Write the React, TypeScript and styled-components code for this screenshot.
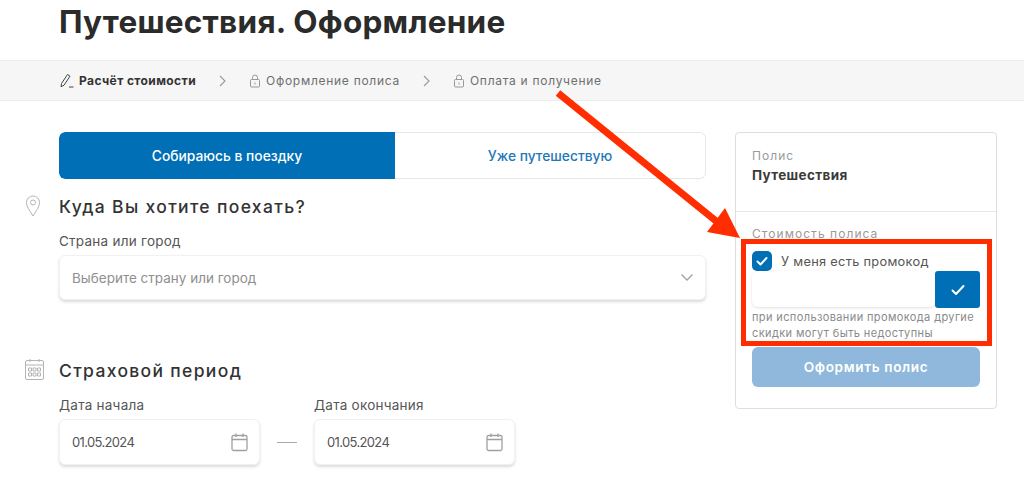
import styled, { createGlobalStyle } from 'styled-components';

const colors = {
  blue: '#006fb5',
  text: '#2f2f2f',
  line: '#e6e6e6',
};

const GlobalStyle = createGlobalStyle`
  html, body {
    margin: 0;
    background: #fff;
  }
  * {
    box-sizing: border-box;
  }
`;

const Page = styled.div`
  position: relative;
  width: 1024px;
  height: 491px;
  overflow: hidden;
  background: #fff;
  color: ${colors.text};
  font-family: Inter, 'Noto Sans', sans-serif;
`;

const Title = styled.h1`
  margin: 0;
  height: 60px;
  padding: 0 0 0 59px;
  font-size: 31.5px;
  line-height: 44px;
  font-weight: 700;
  letter-spacing: 0.25px;
  color: #2b2b2b;
`;

const Steps = styled.nav`
  display: flex;
  align-items: center;
  height: 41px;
  padding-left: 59px;
  background: #f6f6f6;
  border-top: 1px solid #ececec;
  border-bottom: 1px solid #ececec;
  font-size: 12px;
`;

const Step = styled.span<{ $active?: boolean }>`
  display: flex;
  align-items: center;
  gap: 5px;
  letter-spacing: ${p => (p.$active ? '0.4px' : '0.72px')};
  color: ${p => (p.$active ? '#333' : '#6f6f6f')};
  font-weight: ${p => (p.$active ? 700 : 400)};
`;

const StepArrow = styled.svg`
  width: 9px;
  height: 12px;
  margin: 0 22px;
  fill: none;
  stroke: #999;
  stroke-width: 1.1;
`;

const Content = styled.div`
  display: flex;
  align-items: flex-start;
  padding: 31px 0 0 25px;
  gap: 29px;
`;

const Form = styled.div`
  width: 681px;
  flex: none;
`;

const Tabs = styled.div`
  display: flex;
  height: 47px;
  margin-left: 34px;
  background: #fff;
  border-radius: 6px;
  overflow: hidden;
`;

const Tab = styled.div<{ $active?: boolean }>`
  flex: ${p => (p.$active ? '0 0 336px' : '1')};
  display: flex;
  align-items: center;
  justify-content: center;
  font-size: 13.8px;
  font-weight: 500;
  color: ${p => (p.$active ? '#fff' : '#1f78b8')};
  background: ${p => (p.$active ? colors.blue : '#fff')};
  border: ${p => (p.$active ? '0' : `1px solid ${colors.line}`)};
  border-left: 0;
  border-radius: ${p => (p.$active ? '6px 0 0 6px' : '0 6px 6px 0')};
`;

const SectionHead = styled.div<{ $top: number }>`
  display: flex;
  align-items: center;
  height: 24px;
  margin-top: ${p => p.$top}px;
`;

const SectionIcon = styled.svg`
  width: 34px;
  height: 22px;
  flex: none;
  fill: none;
  stroke: #b4b4b4;
  stroke-width: 1;
`;

const SectionTitle = styled.h2`
  margin: 0;
  font-size: 17.5px;
  font-weight: 500;
  letter-spacing: 1.33px;
  color: #333;
`;

const Fields = styled.div`
  display: flex;
  align-items: flex-end;
  margin: 15px 0 0 34px;
`;

const Field = styled.label<{ $wide?: boolean }>`
  display: block;
  width: ${p => (p.$wide ? '647px' : '201px')};
`;

const FieldLabel = styled.div`
  height: 16px;
  margin-bottom: 6px;
  font-size: 13.5px;
  line-height: 16px;
  letter-spacing: 0.25px;
  color: #555;
`;

const InputBox = styled.div<{ $placeholder?: boolean }>`
  display: flex;
  align-items: center;
  justify-content: space-between;
  height: ${p => (p.$placeholder ? 45 : 46)}px;
  padding: 0 11px 0 12px;
  background: #fff;
  border: 1px solid #f1f1f1;
  border-radius: 6px;
  box-shadow: 0 2px 3px rgba(0, 0, 0, 0.14);
  font-size: 13.5px;
  color: ${p => (p.$placeholder ? '#8f8f8f' : '#555')};
`;

const DateValue = styled.span`
  font-size: 13px;
  letter-spacing: -0.65px;
`;

const BoxIcon = styled.svg`
  width: 18px;
  height: 20px;
  fill: none;
  stroke: #a0a0a0;
  stroke-width: 1.3;
`;

const Dash = styled.div`
  width: 20px;
  height: 1px;
  margin: 0 17px 22px 17px;
  background: #aaa;
`;

const Sidebar = styled.aside`
  width: 262px;
  height: 277px;
  flex: none;
  border: 1px solid #dedede;
  border-radius: 4px;
`;

const PolicyBlock = styled.div`
  height: 79px;
  padding: 15px 16px 0;
  border-bottom: 1px solid ${colors.line};
`;

const SideLabel = styled.div`
  font-size: 12px;
  line-height: 15px;
  letter-spacing: 1.05px;
  color: #9a9a9a;
`;

const PolicyName = styled.div`
  margin-top: 4px;
  font-size: 13.5px;
  line-height: 16px;
  font-weight: 700;
  letter-spacing: 0.35px;
  color: #3a3a3a;
`;

const CostBlock = styled.div`
  padding: 14px 16px 0;
`;

const PromoRow = styled.div`
  display: flex;
  align-items: center;
  gap: 9px;
  height: 20px;
  margin-top: 10px;
  font-size: 12.8px;
  letter-spacing: 0.3px;
  color: #555;
`;

const Checkbox = styled.span`
  display: flex;
  align-items: center;
  justify-content: center;
  width: 20px;
  height: 20px;
  border-radius: 5px;
  background: ${colors.blue};
`;

const Check = styled.svg<{ $size: number }>`
  width: ${p => p.$size}px;
  height: ${p => p.$size}px;
  fill: none;
  stroke: #fff;
  stroke-width: 2;
  stroke-linecap: round;
  stroke-linejoin: round;
`;

const PromoInput = styled.div`
  display: flex;
  height: 37px;
`;

const PromoField = styled.div`
  flex: 1;
  margin-bottom: 1px;
  background: #fff;
  border-radius: 6px;
  box-shadow: 0 1px 3px rgba(0, 0, 0, 0.12);
`;

const PromoSubmit = styled.button`
  display: flex;
  align-items: center;
  justify-content: center;
  width: 45px;
  padding: 0;
  border: 0;
  border-radius: 3px;
  background: ${colors.blue};
`;

const Hint = styled.p`
  margin: 0;
  padding-top: 1px;
  font-size: 11px;
  line-height: 16px;
  letter-spacing: 0.38px;
  color: #8a8a8a;
`;

const Submit = styled.button`
  display: block;
  width: 228px;
  height: 40px;
  margin-top: 6px;
  border: 0;
  border-radius: 6px;
  background: #8fb8dc;
  color: #fff;
  font-family: inherit;
  font-size: 13.6px;
  font-weight: 600;
  letter-spacing: 0.65px;
`;

const Annotation = styled.svg`
  position: absolute;
  top: 0;
  left: 0;
  width: 1024px;
  height: 491px;
  pointer-events: none;
`;

const CalendarIcon = () => (
  <BoxIcon viewBox="0 0 18 20">
    <rect x="2" y="3.5" width="15" height="15" rx="1.5" />
    <path d="M2 7.5h15M6 1.5v3.5M13 1.5v3.5" />
  </BoxIcon>
);

const LockIcon = () => (
  <svg width="12" height="14" viewBox="0 0 12 14" fill="none" stroke="#999" strokeWidth="1">
    <rect x="1.5" y="5.5" width="9" height="7.5" rx="1" />
    <path d="M3.5 5.5V3.5a2.5 2.5 0 0 1 5 0v2M6 8.5v2" />
  </svg>
);

const Chevron = () => (
  <StepArrow viewBox="0 0 9 12">
    <path d="M2 1l5 5-5 5" />
  </StepArrow>
);

const App = () => (
  <Page>
    <GlobalStyle />
    <Title>Путешествия. Оформление</Title>
    <Steps>
      <Step $active>
        <svg width="15" height="16" viewBox="0 0 15 16" fill="none" stroke="#444" strokeWidth="1">
          <path d="M2.500 10.500L8.500 1.500l2.500 1.700-6 9-3 1.500zM10 14h4.500" />
        </svg>
        Расчёт стоимости
      </Step>
      <Chevron />
      <Step>
        <LockIcon />
        Оформление полиса
      </Step>
      <Chevron />
      <Step>
        <LockIcon />
        Оплата и получение
      </Step>
    </Steps>
    <Content>
      <Form>
        <Tabs>
          <Tab $active>Собираюсь в поездку</Tab>
          <Tab>Уже путешествую</Tab>
        </Tabs>
        <SectionHead $top={15}>
          <SectionIcon viewBox="0 0 34 22">
            <path d="M8 21C4.5 15.5 1.5 11.5 1.5 7.5a6.5 6.5 0 0 1 13 0c0 4-3 8-6.500 13.500z" />
            <circle cx="8" cy="7.500" r="2.500" />
          </SectionIcon>
          <SectionTitle>Куда Вы хотите поехать?</SectionTitle>
        </SectionHead>
        <Fields>
          <Field $wide>
            <FieldLabel>Страна или город</FieldLabel>
            <InputBox $placeholder>
              Выберите страну или город
              <svg width="14" height="9" viewBox="0 0 14 9" fill="none" stroke="#a0a0a0" strokeWidth="1.3">
                <path d="M1.500 1.500L7 7l5.500-5.500" />
              </svg>
            </InputBox>
          </Field>
        </Fields>
        <SectionHead $top={58}>
          <SectionIcon viewBox="0 0 34 22">
            <rect x="0.500" y="1.500" width="18" height="19" rx="1.500" />
            <path d="M0.500 6h18M5 0v3M14 0v3M3.500 9h3v3h-3zM8 9h3v3H8zM12.500 9h3v3h-3zM3.500 14h3v3h-3zM8 14h3v3H8zM12.500 14h3v3h-3z" />
          </SectionIcon>
          <SectionTitle>Страховой период</SectionTitle>
        </SectionHead>
        <Fields>
          <Field>
            <FieldLabel>Дата начала</FieldLabel>
            <InputBox>
              <DateValue>01.05.2024</DateValue>
              <CalendarIcon />
            </InputBox>
          </Field>
          <Dash />
          <Field>
            <FieldLabel>Дата окончания</FieldLabel>
            <InputBox>
              <DateValue>01.05.2024</DateValue>
              <CalendarIcon />
            </InputBox>
          </Field>
        </Fields>
      </Form>
      <Sidebar>
        <PolicyBlock>
          <SideLabel>Полис</SideLabel>
          <PolicyName>Путешествия</PolicyName>
        </PolicyBlock>
        <CostBlock>
          <SideLabel>Стоимость полиса</SideLabel>
          <PromoRow>
            <Checkbox>
              <Check $size={14} viewBox="0 0 14 14">
                <path d="M2.500 7.500l3 3 6-6.500" />
              </Check>
            </Checkbox>
            У меня есть промокод
          </PromoRow>
          <PromoInput>
            <PromoField />
            <PromoSubmit>
              <Check $size={16} viewBox="0 0 16 16">
                <path d="M2.500 8.500l3.500 3.500 7.500-8" />
              </Check>
            </PromoSubmit>
          </PromoInput>
          <Hint>при использовании промокода другие скидки могут быть недоступны</Hint>
          <Submit>Оформить полис</Submit>
        </CostBlock>
      </Sidebar>
    </Content>
    <Annotation viewBox="0 0 1024 491">
      <path d="M558 93L716 221" stroke="#ff2d00" strokeWidth="7" fill="none" />
      <polygon points="740,238 707,232 725,208" fill="#ff2d00" />
      <rect x="743.500" y="241.500" width="246" height="102" stroke="#ff2d00" strokeWidth="5" fill="none" />
    </Annotation>
  </Page>
);

export default App;
